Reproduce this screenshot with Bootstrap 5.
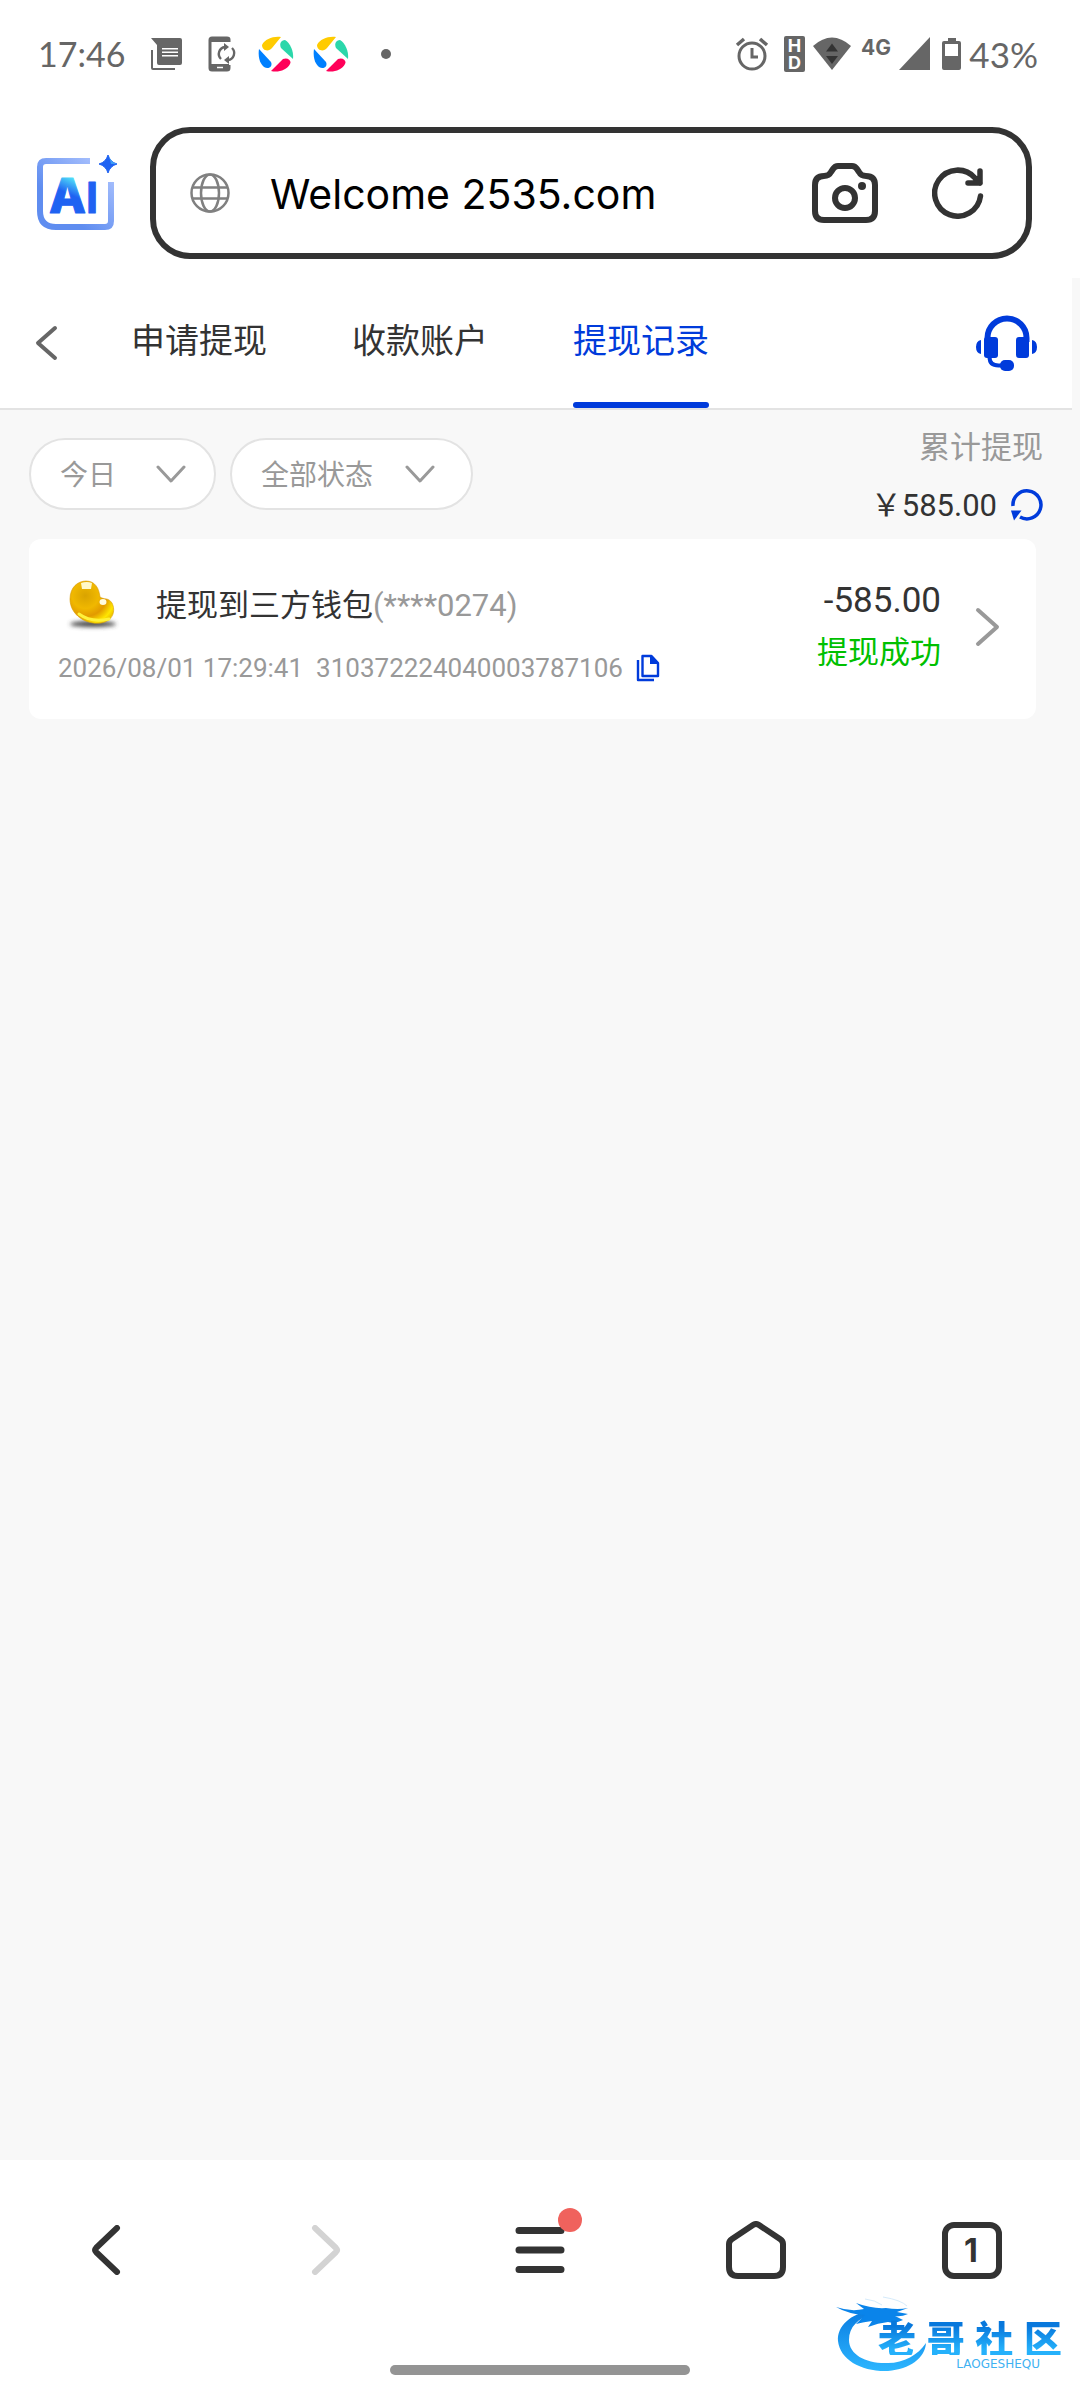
<!DOCTYPE html>
<html lang="zh-CN">
<head>
<meta charset="utf-8">
<meta name="viewport" content="width=device-width, initial-scale=1">
<title>提现记录</title>
<link href="https://cdn.jsdelivr.net/npm/bootstrap@5.3.0/dist/css/bootstrap.min.css" rel="stylesheet">
<style>
  :root { --ink:#333; --muted:#999; --brand:#003bdb; --status:#666; --page:#f8f8f8; }
  body { font-family: Roboto, "Noto Sans CJK SC", sans-serif; color: var(--ink); background:#fff; }
  svg { display:block; flex:none; }
  .status-row { height:108px; padding:0 42px 0 38px; color:var(--status); font-family:Lato, sans-serif; font-size:35px; line-height:40px; }
  .status-left { gap:19px; font-size:34px; }
  .status-right { gap:8px; }
  .address-row { padding:19px 48px 19px 34px; gap:32px; }
  .address-box { height:132px; min-width:0; border:6px solid var(--ink); border-radius:40px; padding:0 42px 0 34px; }
  .address-box input { font-family:Inter, sans-serif; font-size:41px; color:#000; margin:4px 20px 0 40px; width:0; min-width:0; background:transparent; outline:0; }
  .address-tools { gap:54px; }
  .web-page { background:var(--page); padding-right:8px; }
  .tab-bar { height:132px; background:#fff; border-bottom:2px solid #e3e3e3; padding:0 33px 0 34px; }
  .tab-list { gap:85px; margin-left:73px; }
  .tab-link { font-size:34px; line-height:44px; color:var(--ink); text-decoration:none; border-bottom:6px solid transparent; padding-top:2px; position:relative; }
  .tab-link.current { color:var(--brand); }
  .tab-link.current::after { content:""; position:absolute; left:0; right:0; bottom:-6px; height:6px; border-radius:3px; background:var(--brand); }
  .filter-row { padding:16px 29px 0 29px; }
  .filter-set { gap:14px; margin-top:12px; }
  .pill-select { height:72px; width:187px; border:2px solid #e3e3e3; border-radius:36px; font-size:28px; line-height:40px; color:var(--muted); padding:4px 60px 0 29px;
    background-color:#fff; background-position:right 28px center; background-size:30px 20px;
    background-image:url("data:image/svg+xml,%3Csvg xmlns='http://www.w3.org/2000/svg' viewBox='0 0 30 20'%3E%3Cpath d='M2 3l13 14L28 3' fill='none' stroke='%23999' stroke-width='3' stroke-linecap='round' stroke-linejoin='round'/%3E%3C/svg%3E"); }
  .pill-select.wide { width:243px; background-position:right 36px center; }
  .total-box { font-size:31px; line-height:44px; }
  .total-line { margin-top:14px; gap:14px; }
  .txt-muted { color:var(--muted); }
  .record-card { margin:11px 36px 0 29px; height:180px; border-radius:12px; background:#fff; color:var(--ink); padding:0 36px 0 29px; }
  .record-info { padding-top:8px; }
  .record-title { font-size:31px; line-height:44px; gap:32px; }
  .record-meta { font-size:26px; line-height:36px; margin-top:18px; gap:13px; }
  .record-amount { font-size:35px; line-height:44px; }
  .record-state { font-size:31px; line-height:44px; margin-top:8px; color:#00c000; }
  .record-side { gap:33px; padding-bottom:4px; }
  .nav-area { height:240px; }
  .nav-row { height:180px; }
  .nav-row .btn { flex:1 1 0; border:0; padding:0; display:flex; justify-content:center; align-items:center; }
  .home-bar { width:300px; height:10px; border-radius:5px; background:#949494; margin:25px auto 0; }
  .brand-mark { right:18px; bottom:22px; width:226px; height:82px; }
  .brand-name { right:0; top:23px; width:184px; font-family:"Noto Sans CJK SC", sans-serif; font-weight:900; font-size:38px; line-height:36px; }
  .brand-name span { background:linear-gradient(#0878dc 20%, #25b1fb 85%); -webkit-background-clip:text; background-clip:text; color:transparent; }
  .brand-latin { right:22px; top:62px; font-family:"DejaVu Sans", sans-serif; font-size:12px; line-height:12px; color:#3fb2f2; }
</style>
<script src="https://cdn.jsdelivr.net/npm/bootstrap@5.3.0/dist/js/bootstrap.bundle.min.js"></script>
</head>
<body class="d-flex flex-column min-vh-100">

<header>
  <div class="status-row d-flex justify-content-between align-items-center">
    <div class="status-left d-flex align-items-center">
      <span class="me-1">17:46</span>
      <svg width="36" height="36" viewBox="0 0 36 36" fill="currentColor"><path fill-rule="evenodd" d="M3 2h29a2 2 0 0 1 2 2v23a2 2 0 0 1-2 2H11a2 2 0 0 1-2-2V9zM14 12v1.500h16V12zm0 3.500V17h16v-1.500zm0 3.500v1.500h16V19z"/><path d="M3 14h2v18h22v2H5a2 2 0 0 1-2-2z"/></svg>
      <svg width="36" height="36" viewBox="0 0 36 36" fill="none" stroke="currentColor"><path d="M26 6V3.500Q26 2 24 2H9Q7 2 7 4v28q0 2 2 2h15q2 0 2-2v-3" stroke-width="3"/><path d="M7 1h18v5H7zM7 28h19v6H7z" fill="currentColor" stroke="none"/><path d="M14 31.500h6" stroke="#fff" stroke-width="1.500"/><path d="M18 23a7 7 0 0 1 4-12M29 12a7 7 0 0 1-4 12" stroke-width="2.400"/><path d="M21 7v8l5-4zM26 20v8l-5-4z" fill="currentColor" stroke="none"/></svg>
      <svg width="36" height="36" viewBox="0 0 36 36"><g id="swirl"><path fill="#ffcb00" d="M23 1C15 0 7 3 4 9c0 6 7 7 10 3z"/><path fill="#2bd7aa" d="M27 4c5 3 9 11 8 19L23 12c-2-4 0-8 4-8z"/><path fill="#ff0059" d="M32 28c-3 6-12 9-19 7l12-12c5-2 9 2 7 5z"/><path fill="#0080ff" d="M1 13l12 13c2 4-2 8-7 5C1 27 0 19 1 13z"/></g></svg>
      <svg width="36" height="36" viewBox="0 0 36 36"><use href="#swirl"/></svg>
      <svg width="36" height="36" viewBox="0 0 36 36"><circle cx="18" cy="18" r="5" fill="currentColor"/></svg>
    </div>
    <div class="status-right d-flex align-items-center">
      <svg width="42" height="36" viewBox="0 0 42 36" fill="none" stroke="currentColor"><circle cx="18" cy="20" r="13" stroke-width="3"/><path d="M3 9l7-6M33 9l-7-6" stroke-width="3.500"/><path d="M18 12v9h6" stroke-width="3"/></svg>
      <svg width="21" height="36" viewBox="0 0 21 36"><rect width="21" height="36" rx="2" fill="currentColor"/><g fill="#fff" font-family="Inter" font-weight="700" font-size="18" text-anchor="middle"><text x="10.500" y="16">H</text><text x="10.500" y="33">D</text></g></svg>
      <svg width="40" height="36" viewBox="0 0 40 36"><path d="M0 10q19-17 38 0L19 34z" fill="currentColor"/><path d="M13 15.500l6-8 6 8zM13 20h12l-6 8z" fill="#333"/></svg>
      <svg width="30" height="36" viewBox="0 0 30 36"><text x="0" y="19" font-family="Inter" font-weight="700" font-size="21" fill="currentColor">4G</text></svg>
      <svg width="35" height="36" viewBox="0 0 35 36"><path d="M31 1v33H0z" fill="currentColor"/></svg>
      <svg width="19" height="36" viewBox="0 0 19 36"><path fill-rule="evenodd" fill="currentColor" d="M6 2h8v3h3q2 0 2 2v25q0 2-2 2H2q-2 0-2-2V7q0-2 2-2h4zM3 8v12h13V8z"/></svg>
      <span>43%</span>
    </div>
  </div>

  <div class="address-row d-flex align-items-center">
    <button type="button" class="btn p-0 border-0" aria-label="AI">
      <svg width="84" height="84" viewBox="0 0 84 84"><defs><linearGradient id="frame" x1="0" y1="1" x2="1" y2="0"><stop offset=".3" stop-color="#5f8df0"/><stop offset="1" stop-color="#b3c8ff"/></linearGradient><linearGradient id="tip" gradientUnits="userSpaceOnUse" x1="32" y1="46" x2="40" y2="28"><stop offset=".2" stop-color="#1f62f2"/><stop offset="1" stop-color="#4fdcf8"/></linearGradient></defs><path d="M56 10H12q-6 0-6 6v44q0 16 16 16h49q6 0 6-6V31" fill="none" stroke="url(#frame)" stroke-width="6"/><path d="M74 4q2 7 9 9-7 2-9 9-2-7-9-9 7-2 9-9z" fill="#1f62f2" stroke="#1f62f2"/><path d="M75 5q2 6 8 8h-6z" fill="#3f9cf4"/><g font-family="Inter" font-weight="800" stroke-linejoin="round" stroke-width="1"><text x="15" y="62" font-size="48" fill="url(#tip)" stroke="url(#tip)">A</text><text x="52" y="62" font-size="43" font-weight="700" fill="#1f62f2" stroke="#1f62f2">I</text></g></svg>
    </button>
    <div class="address-box d-flex align-items-center flex-grow-1">
      <svg width="40" height="40" viewBox="0 0 40 40" fill="none" stroke="#808080" stroke-width="2.500"><circle cx="20" cy="20" r="18.500"/><ellipse cx="20" cy="20" rx="9" ry="18.500"/><path d="M3 14.500h34M3 25.500h34"/></svg>
      <input type="text" class="border-0 p-0 flex-grow-1" aria-label="网址" value="Welcome 2535.com">
      <div class="address-tools d-flex align-items-center">
        <button type="button" class="btn p-0 border-0" aria-label="相机"><svg width="66" height="62" viewBox="0 0 66 62" fill="none" stroke="#333" stroke-width="6" stroke-linejoin="round"><path d="M12 14q5 0 7-4l2-3q2-3 5-3h14q3 0 5 3l2 3q2 4 7 4 9 0 9 9v26q0 9-9 9H12q-9 0-9-9V23q0-9 9-9z"/><circle cx="33" cy="36" r="10"/><circle cx="50" cy="24" r="4" fill="#333" stroke="none"/></svg></button>
        <button type="button" class="btn p-0 border-0" aria-label="刷新"><svg width="52" height="52" viewBox="0 0 52 52" fill="none" stroke="#333" stroke-width="5.500" stroke-linecap="round" stroke-linejoin="round"><path d="M48.500 29A23 23 0 1 1 43 11l5 5M48 4v12H36"/></svg></button>
      </div>
    </div>
  </div>
</header>

<main class="web-page flex-grow-1">
  <nav class="tab-bar d-flex align-items-center">
    <button type="button" class="btn p-0 border-0" aria-label="返回"><svg width="24" height="36" viewBox="0 0 24 36" fill="none" stroke="#666" stroke-width="4" stroke-linecap="round" stroke-linejoin="round"><path d="M21 3L4 18l17 15"/></svg></button>
    <div class="tab-list d-flex align-self-stretch">
      <a href="#" class="tab-link d-flex align-items-center">申请提现</a>
      <a href="#" class="tab-link d-flex align-items-center">收款账户</a>
      <a href="#" class="tab-link current d-flex align-items-center" aria-current="page">提现记录</a>
    </div>
    <button type="button" class="btn p-0 border-0 ms-auto" aria-label="客服"><svg width="64" height="56" viewBox="0 0 64 56" fill="#003bdb"><path d="M12.500 27V23a19.500 19.500 0 0 1 39 0v4" fill="none" stroke="#003bdb" stroke-width="6"/><rect x="9" y="22" width="14" height="21" rx="3"/><rect x="41" y="22" width="13" height="21" rx="3"/><path d="M6 25v14q-5-1-5-7t5-7zM57 25v14q5-1 5-7t-5-7z"/><path d="M14.500 42q0 8.500 9 8.500h5" fill="none" stroke="#003bdb" stroke-width="4"/><rect x="25" y="45" width="14" height="11" rx="5"/></svg></button>
  </nav>

  <div class="filter-row d-flex justify-content-between align-items-start">
    <div class="filter-set d-flex">
      <select class="form-select pill-select" aria-label="日期"><option>今日</option></select>
      <select class="form-select pill-select wide" aria-label="状态"><option>全部状态</option></select>
    </div>
    <div class="total-box text-end">
      <div class="txt-muted">累计提现</div>
      <div class="total-line d-flex align-items-center justify-content-end">
        <span>￥585.00</span>
        <button type="button" class="btn p-0 border-0" aria-label="刷新金额"><svg width="32" height="34" viewBox="0 0 32 34" fill="none" stroke="#003bdb" stroke-width="3.500"><path d="M2 17A14 14 0 1 1 9 28"/><path d="M0 21.500h10.500L3 31.500z" fill="#003bdb" stroke="none"/></svg></button>
      </div>
    </div>
  </div>

  <section class="record-card d-flex justify-content-between align-items-center">
    <div class="record-info">
      <div class="record-title d-flex align-items-center">
        <svg width="66" height="52" viewBox="-8 0 66 52"><defs><radialGradient id="gold" cx=".35" cy=".35" r=".75"><stop offset="0" stop-color="#d9a300"/><stop offset=".4" stop-color="#f0b800"/><stop offset=".65" stop-color="#e29a00"/><stop offset=".9" stop-color="#ffe600"/><stop offset="1" stop-color="#f0c800"/></radialGradient><filter id="soft" x="-20%" y="-80%" width="140%" height="260%"><feGaussianBlur stdDeviation="2"/></filter></defs><ellipse cx="27" cy="44" rx="23" ry="3" fill="#444" filter="url(#soft)"/><path d="M4 19C4 7 12 1 20 1c9 0 13 7 14 16 4 3 8 0 12 6 4 8 1 18-11 20C20 45 4 35 4 19z" fill="url(#gold)" stroke="#d99a00" stroke-width=".6"/><path d="M15 3q6-2 11 0l-1 6h-9z" fill="#fff9c8"/><ellipse cx="37" cy="22" rx="3.500" ry="3" fill="#fffbe0"/><path d="M13 34q12 9 30 5" fill="none" stroke="#fff23a" stroke-width="3" stroke-linecap="round"/></svg>
        <span>提现到三方钱包<span class="txt-muted">(****0274)</span></span>
      </div>
      <div class="record-meta d-flex align-items-center txt-muted">
        <span>2026/08/01 17:29:41</span>
        <span>310372224040003787106</span>
        <button type="button" class="btn p-0 border-0" aria-label="复制单号"><svg width="24" height="28" viewBox="0 0 24 28" fill="none" stroke="#003bdb"><path d="M6.500 2h9L22 9v13H6.500z" stroke-width="2.400" stroke-linejoin="round"/><path d="M14 1l9 9h-9z" fill="#003bdb" stroke="none"/><path d="M2 6v20h16" stroke-width="2.400" stroke-linejoin="round"/></svg></button>
      </div>
    </div>
    <div class="record-side d-flex align-items-center">
      <div class="text-end">
        <div class="record-amount">-585.00</div>
        <div class="record-state">提现成功</div>
      </div>
      <a href="#" aria-label="查看详情"><svg width="26" height="40" viewBox="0 0 26 40" fill="none" stroke="#999" stroke-width="4" stroke-linecap="round" stroke-linejoin="round"><path d="M4 3l19 17L4 37"/></svg></a>
    </div>
  </section>
</main>

<footer class="nav-area position-relative bg-white">
  <div class="nav-row d-flex">
    <button type="button" class="btn" aria-label="后退"><svg width="34" height="50" viewBox="0 0 34 50" fill="none" stroke="#333" stroke-width="6" stroke-linecap="round" stroke-linejoin="round"><path d="M26 3L5 23q-2 2 0 4l21 20"/></svg></button>
    <button type="button" class="btn" aria-label="前进"><svg width="34" height="50" viewBox="0 0 34 50" fill="none" stroke="#d3d3d3" stroke-width="6" stroke-linecap="round" stroke-linejoin="round"><path d="M8 3l21 20q2 2 0 4L8 47"/></svg></button>
    <button type="button" class="btn" aria-label="菜单"><svg width="84" height="84" viewBox="0 0 84 84" stroke="#333" stroke-width="7" stroke-linecap="round"><path d="M21 22.500h42M21 42h42M21 61.500h42"/><circle cx="72" cy="12" r="12" fill="#f0625d" stroke="none"/></svg></button>
    <button type="button" class="btn" aria-label="主页"><svg width="60" height="58" viewBox="0 0 60 58" fill="none" stroke="#333" stroke-width="6" stroke-linejoin="round"><path d="M27 4q3-2 6 0l21 14q3 2 3 5v23q0 9-9 9H12q-9 0-9-9V23q0-3 3-5z"/></svg></button>
    <button type="button" class="btn" aria-label="标签页"><svg width="60" height="58" viewBox="0 0 60 58"><rect x="3" y="4" width="54" height="51" rx="9" fill="none" stroke="#333" stroke-width="6"/><text x="29" y="41" text-anchor="middle" font-family="Inter" font-weight="700" font-size="32" fill="#333">1</text></svg></button>
  </div>
  <div class="home-bar"></div>
  <div class="brand-mark position-absolute">
    <svg width="226" height="82" viewBox="0 0 226 82"><defs><linearGradient id="wave" x1="0" y1="0" x2="0" y2="1"><stop offset="0" stop-color="#0a7be0"/><stop offset="1" stop-color="#2cb6ff"/></linearGradient></defs><path d="M36 14C14 18 1 30 2 45c2 19 24 31 50 30 22-2 37-13 38-28-8 12-22 20-38 20-21 1-39-8-39-23 0-13 9-22 24-26z" fill="url(#wave)"/><path d="M0 11q15 5 28 2l-8-6q16 6 30 5 12 2 22 0l-11 4 11 2q-7 3-13 2l8 4q-8 4-15 2-10 1-20 5l4-6q-8 1-16 3l9-9Q12 18 0 11z" fill="#0a84ea"/><path d="M29 3q10 1 17 6M47 1q18 3 24 9" fill="none" stroke="#d5ebfb"/></svg>
    <div class="brand-name position-absolute d-flex justify-content-between"><span>老</span><span>哥</span><span>社</span><span>区</span></div>
    <div class="brand-latin position-absolute">LAOGESHEQU</div>
  </div>
</footer>
</body>
</html>
